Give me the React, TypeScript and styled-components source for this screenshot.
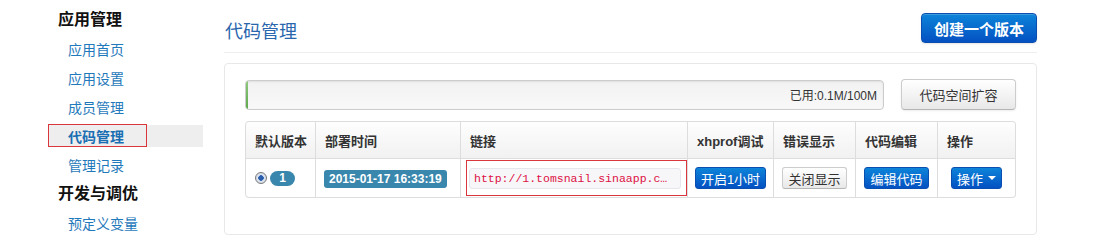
import styled, { createGlobalStyle, css } from 'styled-components'

const GlobalStyle = createGlobalStyle`
    body {
        margin: 0;
        background: #fff;
        color: #333;
        font-family: "Liberation Sans", "Noto Sans CJK SC", sans-serif;
    }
`

const navGroups = [
    { title: '应用管理', items: ['应用首页', '应用设置', '成员管理', '代码管理', '管理记录'] },
    { title: '开发与调优', items: ['预定义变量'] },
]

const columns = [
    { label: '默认版本', w: 70 },
    { label: '部署时间', w: 145 },
    { label: '链接', w: 227 },
    { label: 'xhprof调试', w: 86 },
    { label: '错误显示', w: 82 },
    { label: '代码编辑', w: 82 },
    { label: '操作', w: 78 },
]

const used = 0.1
const quota = 100

export default function App() {
    return (
        <Page>
            <GlobalStyle />
            <Sidebar>
                {navGroups.map(group => (
                    <div key={group.title}>
                        <NavHeading>{group.title}</NavHeading>
                        {group.items.map(item => (
                            <NavRow key={item}>
                                {item === '代码管理' ? (
                                    <NavLink $active>
                                        <Marked>{item}</Marked>
                                    </NavLink>
                                ) : (
                                    <NavLink>{item}</NavLink>
                                )}
                            </NavRow>
                        ))}
                    </div>
                ))}
            </Sidebar>
            <Main>
                <Header>
                    <Title>代码管理</Title>
                    <BigButton>创建一个版本</BigButton>
                </Header>
                <Panel>
                    <StorageRow>
                        <Progress>
                            <Fill style={{ width: `max(2px, ${(used / quota) * 100}%)` }} />
                            <ProgressText>已用:0.1M/100M</ProgressText>
                        </Progress>
                        <TallButton>代码空间扩容</TallButton>
                    </StorageRow>
                    <Table>
                        <thead>
                            <tr>
                                {columns.map(c => (
                                    <Th key={c.label} $w={c.w}>{c.label}</Th>
                                ))}
                            </tr>
                        </thead>
                        <tbody>
                            <tr>
                                <Td>
                                    <VersionCell>
                                        <Radio />
                                        <Badge>1</Badge>
                                    </VersionCell>
                                </Td>
                                <Td>
                                    <DateLabel>2015-01-17 16:33:19</DateLabel>
                                </Td>
                                <Td $flush>
                                    <RedFrame>
                                        <Code>http://1.tomsnail.sinaapp.c…</Code>
                                    </RedFrame>
                                </Td>
                                <Td $center>
                                    <SmallButton $primary>开启1小时</SmallButton>
                                </Td>
                                <Td $center>
                                    <SmallButton>关闭显示</SmallButton>
                                </Td>
                                <Td $center>
                                    <SmallButton $primary>编辑代码</SmallButton>
                                </Td>
                                <Td $center>
                                    <SmallButton $primary>
                                        操作<Caret />
                                    </SmallButton>
                                </Td>
                            </tr>
                        </tbody>
                    </Table>
                </Panel>
            </Main>
        </Page>
    )
}

const Page = styled.div`
    display: flex;
    align-items: flex-start;
    width: 1111px;
`
const Sidebar = styled.nav`
    width: 155px;
    margin-left: 48px;
    padding-top: 5px;
`
const NavHeading = styled.div`
    height: 29px;
    line-height: 29px;
    padding-left: 10px;
    font-size: 16px;
    font-weight: bold;
    color: #111;
`
const NavRow = styled.div`
    height: 29px;
    display: flex;
    align-items: center;
`
const NavLink = styled.a<{ $active?: boolean }>`
    flex: 1;
    height: 22px;
    display: flex;
    align-items: center;
    padding-left: 20px;
    font-size: 14px;
    color: #1f79bb;
    text-decoration: none;
    cursor: pointer;
    ${p => p.$active && css`
        padding-left: 0;
        background: #eee;
        font-weight: bold;
        color: #1a6fb3;
    `}
`
const Marked = styled.span`
    box-sizing: border-box;
    width: 99px;
    height: 23px;
    display: flex;
    align-items: center;
    padding-left: 19px;
    border: 1px solid #d9363e;
`
const Main = styled.main`
    width: 813px;
    margin-left: 21px;
`
const Header = styled.header`
    display: flex;
    justify-content: space-between;
    align-items: flex-end;
    padding-top: 13px;
    padding-bottom: 9px;
    border-bottom: 1px solid #eee;
`
const Title = styled.h2`
    margin: 0 0 0 1px;
    font-size: 18px;
    line-height: 22px;
    font-weight: normal;
    color: #2a66ad;
`
const BigButton = styled.button`
    height: 30px;
    padding: 0 12px;
    border: 1px solid #0a4fb0;
    border-radius: 4px;
    background: linear-gradient(#0d84d9, #0451c2);
    color: #fff;
    font-family: inherit;
    font-size: 15px;
    font-weight: bold;
    white-space: nowrap;
    box-shadow: inset 0 1px 0 rgba(255, 255, 255, 0.2), 0 1px 2px rgba(0, 0, 0, 0.1);
`
const Panel = styled.section`
    margin-top: 10px;
    padding: 15px 20px 36px;
    border: 1px solid #e8e8e8;
    border-radius: 4px;
`
const StorageRow = styled.div`
    display: flex;
    align-items: center;
    gap: 17px;
`
const Progress = styled.div`
    flex: 1;
    box-sizing: border-box;
    height: 30px;
    display: flex;
    align-items: center;
    overflow: hidden;
    border: 1px solid #ccc;
    border-radius: 4px;
    background: linear-gradient(#f2f2f2, #f8f8f8);
    box-shadow: inset 0 1px 2px rgba(0, 0, 0, 0.08);
`
const Fill = styled.div`
    align-self: stretch;
    background: linear-gradient(#8fc97d, #5ea84b);
`
const ProgressText = styled.span`
    margin-left: auto;
    padding-right: 6px;
    font-size: 12px;
    color: #333;
`
const TallButton = styled.button`
    width: 115px;
    height: 31px;
    border: 1px solid #ccc;
    border-bottom-color: #b5b5b5;
    border-radius: 4px;
    background: linear-gradient(#fff, #e8e8e8);
    color: #333;
    font-family: inherit;
    font-size: 13px;
    white-space: nowrap;
    box-shadow: inset 0 1px 0 rgba(255, 255, 255, 0.3), 0 1px 2px rgba(0, 0, 0, 0.08);
`
const Table = styled.table`
    width: 100%;
    margin-top: 11px;
    border-collapse: separate;
    border-spacing: 0;
    border: 1px solid #ddd;
    border-left: 0;
    border-radius: 4px;
    table-layout: fixed;
`
const Th = styled.th<{ $w: number }>`
    width: ${p => p.$w}px;
    height: 36px;
    padding: 0 9px;
    box-sizing: border-box;
    border-left: 1px solid #ddd;
    background: linear-gradient(#fefefe, #f1f1f1);
    text-align: left;
    font-size: 13px;
    font-weight: bold;
    color: #333;
    white-space: nowrap;
    &:first-child { border-top-left-radius: 4px; }
    &:last-child { border-top-right-radius: 4px; }
`
const Td = styled.td<{ $center?: boolean; $flush?: boolean }>`
    height: 38px;
    padding: 0 8px;
    border-left: 1px solid #ddd;
    border-top: 1px solid #ddd;
    vertical-align: middle;
    white-space: nowrap;
    text-align: ${p => (p.$center ? 'center' : 'left')};
    ${p => p.$center && css`padding: 0;`}
    ${p => p.$flush && css`padding: 0 0 0 5px;`}
    &:first-child { border-bottom-left-radius: 4px; }
`
const VersionCell = styled.div`
    display: flex;
    align-items: center;
    gap: 3px;
    padding-left: 1px;
`
const Radio = styled.span`
    box-sizing: border-box;
    width: 12px;
    height: 12px;
    border-radius: 50%;
    border: 1px solid #7a7a7a;
    background: radial-gradient(circle, #2b5fae 0 2.5px, #dfe7f2 3px, #c9cfd8 100%);
`
const Badge = styled.span`
    width: 25px;
    height: 15px;
    line-height: 15px;
    border-radius: 8px;
    background: #3a87ad;
    color: #fff;
    text-align: center;
    font-size: 12px;
    font-weight: bold;
`
const DateLabel = styled.span`
    display: inline-block;
    height: 18px;
    line-height: 18px;
    padding: 0 5px;
    border-radius: 3px;
    background: #3a87ad;
    color: #fff;
    font-size: 12px;
    font-weight: bold;
    white-space: nowrap;
`
const RedFrame = styled.div`
    box-sizing: border-box;
    height: 36px;
    display: flex;
    align-items: center;
    padding: 0 5px 0 2px;
    border: 1px solid #d9363e;
`
const Code = styled.code`
    display: block;
    flex: 1;
    min-width: 0;
    box-sizing: border-box;
    height: 21px;
    line-height: 19px;
    padding: 0 4px;
    border: 1px solid #e6e6ec;
    border-radius: 3px;
    background: #f7f7f9;
    color: #dd1144;
    font-family: "Liberation Mono", monospace;
    font-size: 11.5px;
    white-space: nowrap;
`
const SmallButton = styled.button<{ $primary?: boolean }>`
    display: inline-flex;
    align-items: center;
    gap: 4px;
    height: 22px;
    padding: 0 5px;
    border-radius: 3px;
    font-family: inherit;
    font-size: 13px;
    white-space: nowrap;
    ${p => p.$primary ? css`
        border: 1px solid #0a4fb0;
        background: linear-gradient(#0d84d9, #0451c2);
        color: #fff;
    ` : css`
        border: 1px solid #ccc;
        border-bottom-color: #b5b5b5;
        background: linear-gradient(#fff, #e8e8e8);
        color: #333;
    `}
`
const Caret = styled.span`
    width: 0;
    height: 0;
    border-left: 4px solid transparent;
    border-right: 4px solid transparent;
    border-top: 4px solid #fff;
    margin-left: 1px;
`
